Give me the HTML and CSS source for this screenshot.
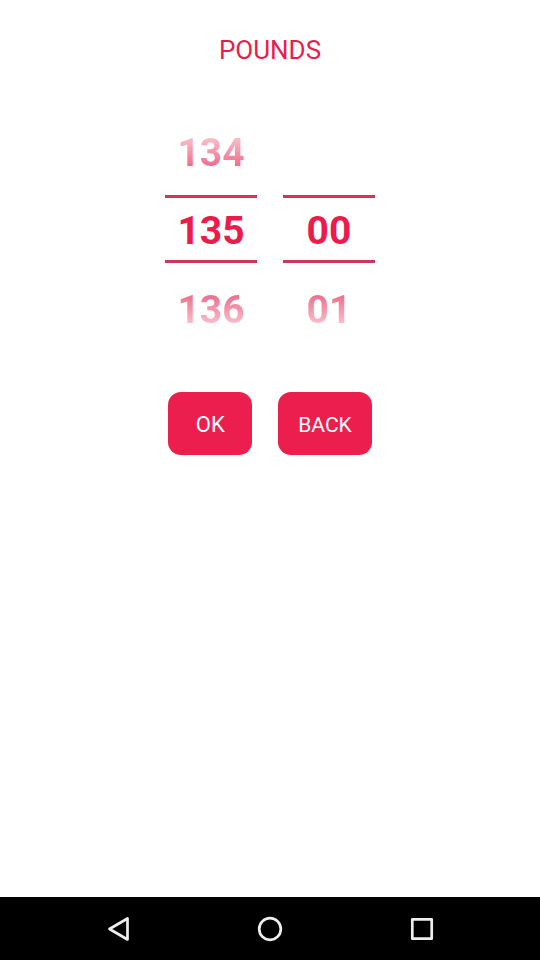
FILE: index.html
```html
<!DOCTYPE html>
<html lang="en">
<head>
<meta charset="utf-8">
<meta name="viewport" content="width=device-width, initial-scale=1">
<title>Pounds</title>
<link rel="stylesheet" href="styles.css">
</head>
<body>
<main class="picker">
  <h1 class="title">POUNDS</h1>
  <div class="wheels">
    <div class="wheel">
      <button class="value above">134</button>
      <output class="value current">135</output>
      <button class="value below">136</button>
    </div>
    <div class="wheel">
      <span class="value above"></span>
      <output class="value current">00</output>
      <button class="value below">01</button>
    </div>
  </div>
  <div class="actions">
    <button class="action">OK</button>
    <button class="action action-back">BACK</button>
  </div>
</main>
<nav class="navbar">
  <button class="nav-button" aria-label="Back"><svg width="28" height="28" viewBox="0 0 28 28"><path d="M23.500 3.500V24.500L5.500 14Z"/></svg></button>
  <button class="nav-button" aria-label="Home"><svg width="28" height="28" viewBox="0 0 28 28"><circle cx="14" cy="14" r="10.800"/></svg></button>
  <button class="nav-button" aria-label="Recent apps"><svg width="28" height="28" viewBox="0 0 28 28"><rect x="4.300" y="4.300" width="19.400" height="19.400"/></svg></button>
</nav>
</body>
</html>
```
FILE: styles.css
```css
* {
  box-sizing: border-box;
}

body {
  margin: 0;
  min-height: 100vh;
  display: flex;
  flex-direction: column;
  background: #fff;
  color: #eb1c4c;
  font-family: Roboto, sans-serif;
}

button {
  border: 0;
  padding: 0;
  background: none;
  color: inherit;
  font: inherit;
}

.picker {
  flex: 1;
  display: flex;
  flex-direction: column;
  align-items: center;
  padding-top: 34px;
}

.title {
  margin: 0;
  font-size: 26px;
  line-height: 32px;
  font-weight: 400;
}

.wheels {
  display: flex;
  gap: 26px;
  margin-top: 50px;
}

.wheel {
  display: grid;
  grid-template-rows: 79px 68px 79px;
  width: 92px;
}

.wheel .value {
  display: block;
  text-align: center;
  font-size: 39px;
  line-height: 48px;
  font-weight: 700;
}

.wheel .current {
  padding-top: 5px;
  border-top: 3px solid #d83259;
  border-bottom: 3px solid #c8385f;
  line-height: 56px;
}

.wheel .above,
.wheel .below {
  background-clip: text;
  color: transparent;
}

.wheel .above {
  align-self: end;
  margin-bottom: 18px;
  background-image: linear-gradient(#fac3cf 15%, #ee6283 85%);
}

.wheel .below {
  align-self: start;
  margin-top: 23px;
  background-image: linear-gradient(#ec6a88 15%, #fbc6d2 85%);
}

.actions {
  display: flex;
  gap: 26px;
  margin-top: 50px;
}

.action {
  padding: 2px 20px 0;
  min-width: 84px;
  height: 63px;
  border-radius: 13px;
  background: #eb1e4d;
  color: #fff;
  font-size: 22px;
}

.action-back {
  font-size: 21px;
}

.navbar {
  display: flex;
  justify-content: center;
  align-items: center;
  gap: 124px;
  height: 63px;
  background: #000;
}

.nav-button {
  display: flex;
}

.nav-button svg {
  fill: none;
  stroke: #eee;
  stroke-width: 2.7;
  stroke-linejoin: round;
}
```
